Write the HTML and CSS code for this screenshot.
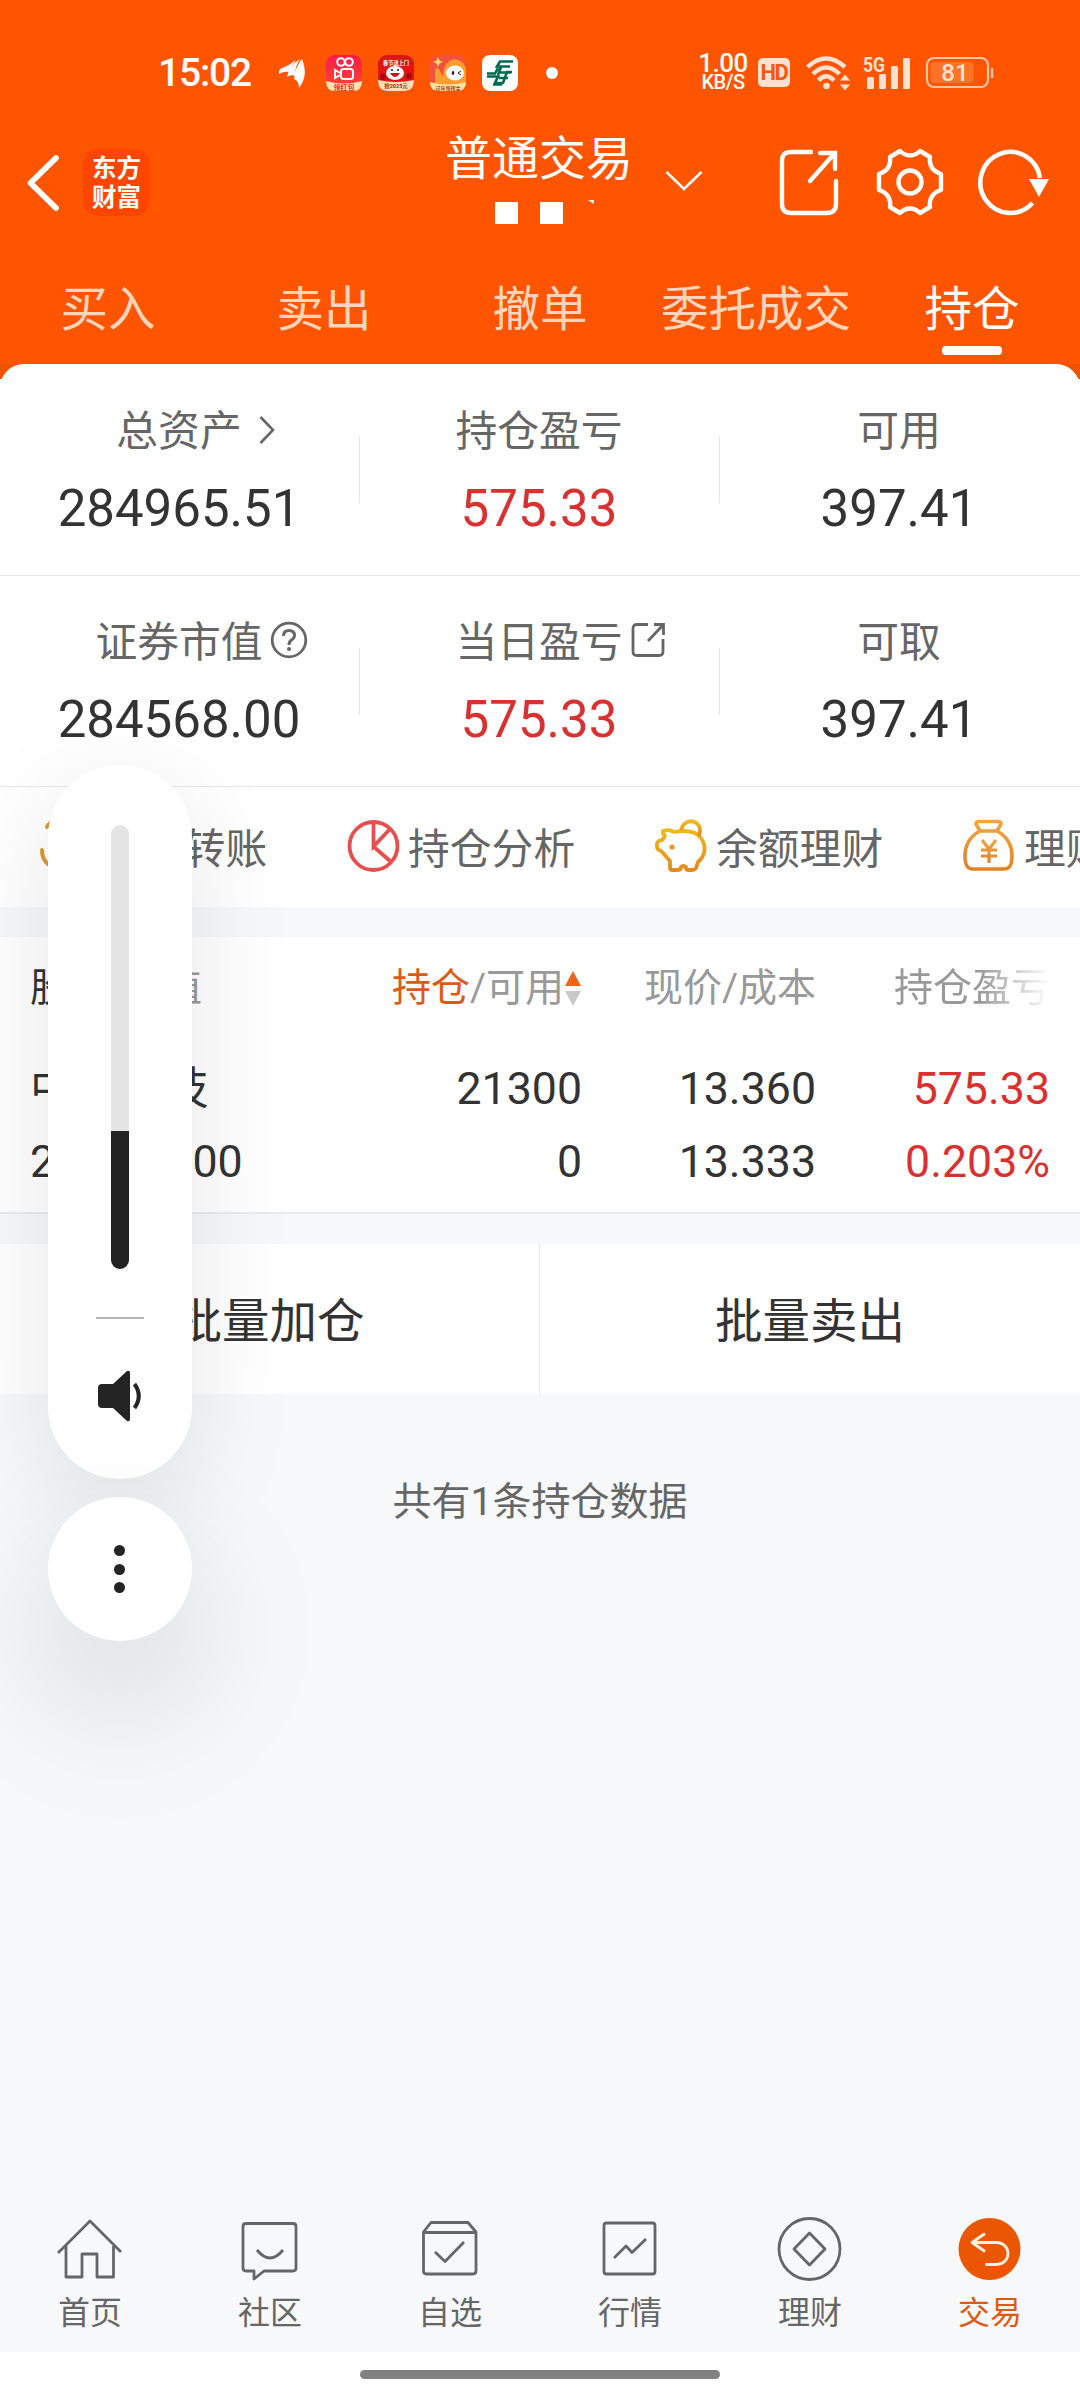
FILE: index.html
```html
<!DOCTYPE html>
<html lang="zh-CN">
<head>
<meta charset="utf-8">
<title>普通交易</title>
<link rel="stylesheet" href="styles.css">
</head>
<body>
<div class="screen">
  <header class="top">
    <div class="status">
      <span class="time">15:02</span>
      <svg class="plane" width="28" height="32" viewBox="0 0 28 32"><path d="M1 15Q1 12 4 11Q12 8 18 3Q14 8 11 15Q6 14 1 17ZM9 20Q11 9 22 2Q17 9 17 19Q13 17 9 20ZM16 22Q17 10 24 2Q31 18 21 31Q21 24 16 22Z" fill="#fff"/></svg>
      <div class="apps">
        <svg width="36" height="36" viewBox="0 0 36 36"><defs><linearGradient id="pink" x1="0" y1="0" x2="0" y2="1"><stop offset="0" stop-color="#fb1a4b"/><stop offset="1" stop-color="#fb4a30"/></linearGradient></defs><rect width="36" height="36" rx="9" fill="url(#pink)"/><path d="M0 26Q18 31 36 26Q36 36 27 36H9Q0 36 0 26Z" fill="#ffe3b0"/><g fill="none" stroke="#fff" stroke-width="2"><circle cx="15" cy="7" r="3.800"/><circle cx="23" cy="7" r="3.800"/><rect x="15" y="14" width="12" height="10" rx="2.500"/><path d="M14 18L9 15V23L14 20"/></g><text x="18" y="34.500" text-anchor="middle" font-size="7" font-weight="700" fill="#e0261c">领红包</text></svg>
        <svg width="36" height="36" viewBox="0 0 36 36"><rect width="36" height="36" rx="9" fill="#e01413"/><path d="M0 25Q18 29 36 25Q36 36 27 36H9Q0 36 0 25Z" fill="#ffe0b4"/><ellipse cx="17" cy="18" rx="9" ry="7" fill="#fff"/><path d="M12 18Q17 26 22 18Z" fill="#c61920"/><circle cx="14" cy="15" r="1" fill="#222"/><circle cx="20" cy="15" r="1" fill="#222"/><circle cx="5" cy="22" r="3" fill="#a80712"/><circle cx="31" cy="21" r="3" fill="#a80712"/><text x="18" y="10" text-anchor="middle" font-size="5.200" font-weight="700" fill="#fff">春节送上门</text><text x="18" y="33" text-anchor="middle" font-size="5.500" font-weight="700" fill="#a52a12">抢2025元</text></svg>
        <svg width="36" height="36" viewBox="0 0 36 36"><rect width="36" height="36" rx="9" fill="#f2523b"/><path d="M5 30V16Q5 11 9 14L13 22Q13 7 24 4Q36 6 36 16V30Z" fill="#ff9d2e"/><path d="M0 27Q18 32 36 27Q36 36 27 36H9Q0 36 0 27Z" fill="#ffe2a6"/><ellipse cx="25" cy="18" rx="9" ry="7.500" fill="#fff"/><ellipse cx="23" cy="18" rx="1.300" ry="2" fill="#222"/><path d="M31 16L28 18L31 20" fill="none" stroke="#222"/><path d="M8 2L9.500 5.500L13 7L9.500 8.500L8 12L6.500 8.500L3 7L6.500 5.500Z" fill="#ffd66b"/><text x="18" y="34.500" text-anchor="middle" font-size="5" font-weight="700" fill="#9b4a12">过年领现金</text></svg>
        <svg width="36" height="36" viewBox="0 0 36 36"><rect width="36" height="36" rx="8" fill="#fff"/><g fill="none" stroke="#00694f" stroke-width="2.600"><path d="M31 6.500H18L15 11.500H28M5 18.500H13L16 13M5 21.500H16L13 28H21L25 17H30M19 12L16 20M11 29.500H20M18 17.500H29M17 23H26"/></g></svg>
      </div>
      <span class="more-dot"></span>
      <div class="speed"><span class="speed-num">1.00</span><span class="speed-unit">KB/S</span></div>
      <span class="hd">HD</span>
      <svg class="wifi" width="48" height="36" viewBox="0 0 48 36"><g fill="none" stroke="#ffe1d1" stroke-width="4.400"><path d="M3.500 12Q22 -5 41 12"/><path d="M9 19Q22 6 35.500 19"/><path d="M14.500 25.500Q22 17 30 25.500"/></g><circle cx="22.500" cy="31" r="3.300" fill="#ffe1d1"/><path d="M35 26L41 19L47 26ZM35 29L41 36L47 29Z" fill="#ffe1d1" stroke="#ff5500"/></svg>
      <svg class="signal" width="50" height="36" viewBox="0 0 50 36"><text x="1" y="17" font-size="20" font-weight="700" textLength="22" lengthAdjust="spacingAndGlyphs" class="latin">5G</text><g fill="#ffe1d1"><rect x="5" y="22" width="7" height="12" rx="1.500"/><rect x="17" y="19" width="7" height="15" rx="1.500"/><rect x="29" y="11" width="7" height="23" rx="1.500"/><rect x="41" y="3" width="7" height="31" rx="1.500"/></g></svg>
      <svg class="battery" width="70" height="34" viewBox="0 0 70 34"><rect x="2" y="2" width="61" height="29" rx="7" fill="none" stroke="#ffc6a5" stroke-width="2.200"/><rect x="5.500" y="6" width="43" height="21" rx="4" fill="#ff7228"/><path d="M67 12V22" stroke="#ffc6a5" stroke-width="2.500"/><text x="30" y="25" text-anchor="middle" font-size="24" font-weight="500" class="latin">81</text></svg>
    </div>
    <div class="titlebar">
      <svg class="back" width="34" height="58" viewBox="0 0 34 58"><path d="M30 4L4.500 29L30 54" fill="none" stroke="#fff" stroke-width="5.800" stroke-linecap="round" stroke-linejoin="round"/></svg>
      <div class="brand"><span>东方</span><span>财富</span></div>
      <div class="title">
        <h1>普通交易</h1>
        <div class="mask"><i></i><i></i><b></b></div>
      </div>
      <svg class="drop" width="40" height="22" viewBox="0 0 40 22"><path d="M2.500 2L20 19L37.500 2" fill="none" stroke="#fff" stroke-width="2.600"/></svg>
      <svg class="share" width="64" height="70" viewBox="0 0 64 70"><g fill="none" stroke="#fff" stroke-width="4.400" stroke-linecap="round"><path d="M34 5H14Q5 5 5 14V57Q5 66 14 66H50Q59 66 59 57V34"/><path d="M43 6H58V22M57 7L33 34"/></g></svg>
      <svg class="gear" width="70" height="70" viewBox="0 0 70 70"><g fill="none" stroke="#fff" stroke-width="4.400" stroke-linejoin="round"><circle cx="35" cy="35" r="11.500"/><path d="M25 4L15 10C16 18 13 24 4 27V43C13 46 16 52 15 60L25 66C31 60 39 60 45 66L55 60C54 52 57 46 66 43V27C57 24 54 18 55 10L45 4C39 10 31 10 25 4Z"/></g></svg>
      <svg class="refresh" width="74" height="70" viewBox="0 0 74 70"><path d="M55.500 56A30 30.500 0 1 1 63 31" fill="none" stroke="#fff" stroke-width="4.600"/><path d="M52 32H72L62 50Z" fill="#fff"/></svg>
    </div>
    <nav class="tabs">
      <span>买入</span><span>卖出</span><span>撤单</span><span>委托成交</span><span class="on">持仓</span>
    </nav>
  </header>

  <main>
    <div class="corner">
    <section class="assets">
      <div class="row">
        <div class="cell"><span class="label">总资产<svg class="go" width="18" height="32" viewBox="0 0 18 32"><path d="M2.500 3L15 16L2.500 29" fill="none" stroke="#666" stroke-width="2.600"/></svg></span><span class="value">284965.51</span></div>
        <div class="cell"><span class="label">持仓盈亏</span><span class="value up">575.33</span></div>
        <div class="cell"><span class="label">可用</span><span class="value">397.41</span></div>
      </div>
      <div class="row">
        <div class="cell"><span class="label">证券市值<svg class="tip" width="38" height="38" viewBox="0 0 38 38"><circle cx="19" cy="19" r="16.800" fill="none" stroke="#666" stroke-width="2.800"/><path d="M13.500 15Q13.500 9.500 19 9.500Q24.500 9.500 24.500 14.500Q24.500 17 21.500 19Q19 20.500 19 24" fill="none" stroke="#666" stroke-width="3"/><circle cx="19" cy="28" r="2" fill="#666"/></svg></span><span class="value">284568.00</span></div>
        <div class="cell"><span class="label">当日盈亏<svg class="tip" width="38" height="38" viewBox="0 0 38 38"><g fill="none" stroke="#666" stroke-width="2.800"><path d="M18 3.500H7Q3 3.500 3 7.500V30.500Q3 34.500 7 34.500H29Q33 34.500 33 30.500V18"/><path d="M24 3.500H33.500V14M33 4L18 20"/></g></svg></span><span class="value up">575.33</span></div>
        <div class="cell"><span class="label">可取</span><span class="value">397.41</span></div>
      </div>
    </section>
    </div>

    <section class="tools">
      <div class="tool"><svg width="54" height="56" viewBox="0 0 54 56"><g fill="none" stroke="#dc9a38" stroke-width="4" stroke-linecap="round"><path d="M4 32C4 42 10 49 20 50H42"/><path d="M9 9C12 3 18 3 24 3H40"/></g></svg><span>银证转账</span></div>
      <div class="tool"><svg width="54" height="56" viewBox="0 0 54 56"><g fill="none" stroke="#e64f4f" stroke-width="3.800"><circle cx="27.500" cy="28" r="24"/><path d="M27.500 4V28.500L44 11M27.500 28.500L44 43"/></g></svg><span>持仓分析</span></div>
      <div class="tool"><svg width="54" height="56" viewBox="0 0 54 56"><defs><linearGradient id="gold" x1="0" y1="1" x2="0" y2="0"><stop offset="0" stop-color="#e68a1c"/><stop offset="1" stop-color="#efb820"/></linearGradient><linearGradient id="amber" x1="0" y1="1" x2="0" y2="0"><stop offset="0" stop-color="#e08326"/><stop offset="1" stop-color="#f1a443"/></linearGradient></defs><g fill="none" stroke="url(#gold)" stroke-width="3.800" stroke-linejoin="round"><path d="M9 13C12 12 17 12 20 14C31 12 42 13 47 20C53 29 51 38 44 44L42 50Q41 52 38 52H34Q32 52 32 49Q29 47 27 49Q27 52 24 52H18Q16 52 16 49V43L9 35Q8 33 5 32Q3 31 3 28V26Q3 23 8 22L11 18Q8 15 9 13Z"/><path d="M27 12C30 0 44 1 46 11Q46 15 45 18"/></g><circle cx="18" cy="29" r="2.600" fill="#e8982a"/></svg><span>余额理财</span></div>
      <div class="tool"><svg width="54" height="56" viewBox="0 0 54 56"><g fill="none" stroke="url(#amber)" stroke-width="3.600" stroke-linejoin="round"><path d="M18 13L14 6Q14 3.500 17 3.500H36Q39 3.500 39 6L35 13ZM18 13C7 19 3 29 3 38C3 47 5 51 11 51H42C48 51 50 47 50 38C50 29 46 19 35 13"/><path d="M20 22L27 31L34 22M19 32H35M19 38H35M27 31V45" stroke-width="3.200"/></g></svg><span>理财</span></div>
    </section>

    <section class="holdings">
      <div class="line head">
        <span class="name"><em>股票</em>/市值</span>
        <span class="num"><em class="hot">持仓</em>/可用<svg class="sort" width="18" height="38" viewBox="0 0 18 38"><path d="M1 17L9 2L17 17Z" fill="#f06318"/><path d="M1 22H17L9 37Z" fill="#c9c9c9"/></svg></span>
        <span class="num">现价/成本</span>
        <span class="num fade">持仓盈亏</span>
      </div>
      <div class="line first"><span class="name stock">中国科技</span><span class="num">21300</span><span class="num">13.360</span><span class="num up">575.33</span></div>
      <div class="line second"><span class="name">284568.00</span><span class="num">0</span><span class="num">13.333</span><span class="num up">0.203%</span></div>
    </section>

    <section class="batch"><span>批量加仓</span><span>批量卖出</span></section>
    <p class="count">共有1条持仓数据</p>
  </main>

  <nav class="bottom">
    <a><svg width="72" height="72" viewBox="0 0 72 72"><path d="M4 40L36 8L67 39M12 33V64H28V41H43V64H59.500V33"/></svg>首页</a>
    <a><svg width="72" height="72" viewBox="0 0 72 72"><path d="M12 10.500H59Q62 10.500 62 13.500V55Q62 58 59 58H30L20 66V58H12Q9 58 9 55V13.500Q9 10.500 12 10.500ZM23 37Q36 53 49 37"/></svg>社区</a>
    <a><svg width="72" height="72" viewBox="0 0 72 72"><path d="M9.500 19L17 9.500H54L62 19V58Q62 61 59 61H12.500Q9.500 61 9.500 58ZM9.500 19.500H62M21 39L31 48.500L50 29"/></svg>自选</a>
    <a><svg width="72" height="72" viewBox="0 0 72 72"><rect x="10" y="10" width="51" height="51" rx="2.500"/><path d="M20 45L32 33L38 39.500L52 26"/></svg>行情</a>
    <a><svg width="72" height="72" viewBox="0 0 72 72"><circle cx="35.500" cy="36" r="30.500"/><path d="M35.500 20L51 36L35.500 52L20 36Z"/></svg>理财</a>
    <a class="on"><svg width="72" height="72" viewBox="0 0 72 72"><circle cx="35.500" cy="36" r="31" class="disc"/><path d="M31 20.500L18 29.500L31 38.500M18 29.500H42C58 29.500 58 51.500 42 51.500H31.500" class="undo"/></svg>交易</a>
  </nav>
  <div class="gesture"><i></i></div>

  <aside class="volume">
    <div class="slider"><div class="level"></div></div>
    <hr>
    <svg width="48" height="54" viewBox="0 0 48 54"><path d="M6 15H17L31 2Q34 1 34 4V50Q34 53 31 52L17 39H6Q2 39 2 35V19Q2 15 6 15Z" fill="#242424"/><path d="M38.500 15Q47 27 38.500 39" fill="none" stroke="#242424" stroke-width="4"/></svg>
  </aside>
  <aside class="more"><i></i><i></i><i></i></aside>
</div>
</body>
</html>
```
FILE: styles.css
```css
* { box-sizing: border-box; margin: 0; padding: 0; }
body {
  width: 1080px;
  background: #f7f8fa;
  font-family: Roboto, "Noto Sans CJK SC", sans-serif;
  color: #333;
}
svg { display: block; flex: none; }
i, em { font-style: normal; }
.latin { font-family: Roboto, sans-serif; fill: #ffe1d1; }

.screen {
  position: relative;
  width: 1080px;
  height: 2400px;
  overflow: hidden;
  display: flex;
  flex-direction: column;
}
.top { background: #ff5500; color: #fff; height: 364px; flex: none; }

/* system status bar */
.status { display: flex; align-items: center; height: 125px; padding: 20px 0 0 158px; }
.time { width: 120px; font-size: 39px; font-weight: 500; line-height: 40px; letter-spacing: -1.200px; }
.plane { margin-right: 20px; }
.apps { display: flex; gap: 16px; }
.more-dot { width: 12px; height: 12px; margin-left: 28px; border-radius: 50%; background: #fff; }
.speed { width: 52px; margin-left: 139px; display: flex; flex-direction: column; align-items: center; font-weight: 500; }
.speed-num { font-size: 26px; line-height: 20px; letter-spacing: -0.500px; }
.speed-unit { font-size: 20px; line-height: 19px; letter-spacing: -0.500px; }
.hd {
  width: 32px; height: 29px; margin-left: 9px; border-radius: 5px;
  background: #ffe1d1; color: #f25a10;
  font-size: 22px; font-weight: 700; line-height: 30px; text-align: center; letter-spacing: -1.500px;
}
.wifi { margin-left: 14px; }
.signal { margin-left: 10px; overflow: visible; }
.battery { margin-left: 13px; }

/* title row */
.titlebar { display: flex; align-items: center; height: 115px; padding-left: 26px; }
.brand {
  width: 67px; height: 67px; margin-left: 23px; border-radius: 15px; background: #ff4600;
  display: flex; flex-direction: column; align-items: center; justify-content: center;
  font-family: "Noto Sans CJK SC", sans-serif;
  font-size: 24.500px; font-weight: 700; line-height: 29px; padding-bottom: 4px;
}
.title { width: 190px; height: 115px; margin-left: 295px; display: flex; flex-direction: column; }
.title h1 { font-size: 47px; font-weight: 400; line-height: 50px; padding-top: 9px; height: 77px; white-space: nowrap; }
.mask { display: flex; gap: 22px; padding-left: 50px; }
.mask i { width: 23px; height: 22px; background: #fff; }
.mask b { width: 6px; height: 4px; margin-top: -2px; margin-left: 3px; background: #fff; clip-path: polygon(0 0, 100% 0, 100% 100%); }
.drop { margin-left: 29px; margin-top: -4px; }
.share { margin-left: 73px; margin-top: -2px; }
.gear { margin-left: 34px; margin-top: -1px; }
.refresh { margin-left: 32px; margin-top: -2px; }

.tabs { display: grid; grid-template-columns: repeat(5, 216px); height: 124px; }
.tabs span {
  display: flex; flex-direction: column; align-items: center;
  padding-top: 40px; font-size: 47.500px; line-height: 60px; color: #ffd5bd;
}
.tabs .on { color: #fff; }
.tabs .on::after { content: ""; width: 60px; height: 9px; margin-top: 6px; border-radius: 4px; background: #fff; }

/* account summary */
.corner { background: linear-gradient(#f05300 15px, #fff 15px); }
.assets { background: #fff; border-radius: 24px 24px 0 0; }
.row { display: grid; grid-template-columns: repeat(3, 360px); height: 211px; border-bottom: 1px solid #e8e8e8; }
.row:first-child { height: 212px; }
.row:first-child .cell { padding-top: 43px; }
.cell { position: relative; display: flex; flex-direction: column; align-items: center; padding: 42px 2px 0 0; }
.cell + .cell::before { content: ""; position: absolute; left: -1px; top: 72px; width: 1px; height: 67px; background: #e8e8e8; }
.label { position: relative; font-size: 41.800px; line-height: 50px; color: #666; }
.value { margin-top: 22px; font-size: 51px; line-height: 60px; }
.go { position: absolute; left: 142px; top: 7px; }
.tip { position: absolute; left: 175px; top: 3px; }
.up { color: #d93030; }

/* shortcut strip */
.tools { display: flex; height: 120px; padding: 0 0 2px 38px; background: #fff; overflow: hidden; }
.tool { flex: none; width: 308px; display: flex; align-items: center; gap: 8px; font-size: 41.800px; color: #666; white-space: nowrap; }

/* holdings table */
.holdings { height: 277px; margin-top: 30px; background: #fff; border-bottom: 2px solid #eaebed; padding-right: 30px; }
.line { display: grid; grid-template-columns: 350px 202px 234px 234px; padding-left: 30px; }
.line .num { text-align: right; white-space: nowrap; }
.head { font-size: 39px; line-height: 50px; padding-top: 26px; color: #999; }
.head em { color: #333; }
.head .hot { color: #dc5a14; }
.head .num:nth-child(2) { display: flex; justify-content: flex-end; align-items: center; }
.fade { -webkit-mask-image: linear-gradient(90deg, #000 70%, transparent 100%); mask-image: linear-gradient(90deg, #000 70%, transparent 100%); }
.first, .second { font-size: 44.700px; line-height: 60px; }
.first { margin-top: 46px; }
.second { margin-top: 13px; }
.stock { font-size: 44.700px; }

.batch { display: grid; grid-template-columns: 539px 541px; height: 150px; margin-top: 30px; background: #fff; }
.batch span { display: flex; align-items: center; justify-content: center; padding-bottom: 4px; font-size: 47.500px; }
.batch span + span { border-left: 1px solid #e8e8e8; }
.count { margin-top: 83px; text-align: center; font-size: 39px; line-height: 50px; color: #666; }

/* app navigation */
.bottom { display: grid; grid-template-columns: repeat(6, 180px); height: 139px; margin-top: auto; background: #f7f8fa; }
.bottom a { display: flex; flex-direction: column; align-items: center; font-size: 32px; line-height: 40px; color: #666; gap: 8px; }
.bottom svg { fill: none; stroke: #666; stroke-width: 2.800; stroke-linejoin: round; }
.bottom .on { color: #dc5a14; }
.bottom .disc { fill: #eb5602; stroke: none; }
.bottom .undo { stroke: #fff0e4; }
.gesture { height: 48px; flex: none; background: #fff; display: flex; justify-content: center; padding-top: 18px; }
.gesture i { width: 360px; height: 9px; border-radius: 5px; background: #808080; }

/* floating volume control */
.volume {
  position: absolute; left: 48px; top: 765px; width: 144px; height: 714px; border-radius: 72px;
  background: #fff; box-shadow: 0 30px 110px rgba(0, 0, 0, 0.1);
  display: flex; flex-direction: column; align-items: center; padding-top: 60px;
}
.slider { width: 18px; height: 444px; border-radius: 9px; background: #e4e4e4; overflow: hidden; display: flex; align-items: flex-end; }
.level { width: 18px; height: 138px; background: #222; }
.volume hr { width: 48px; height: 2px; margin: 48px 0 50px; border: 0; background: #b4b4b4; }
.more {
  position: absolute; left: 48px; top: 1497px; width: 144px; height: 144px; border-radius: 50%;
  background: #fff; box-shadow: 0 60px 130px 20px rgba(0, 0, 0, 0.1);
  display: flex; flex-direction: column; align-items: center; justify-content: center; gap: 7.500px; padding-right: 2px;
}
.more i { width: 11px; height: 11px; border-radius: 50%; background: #242424; }
```
